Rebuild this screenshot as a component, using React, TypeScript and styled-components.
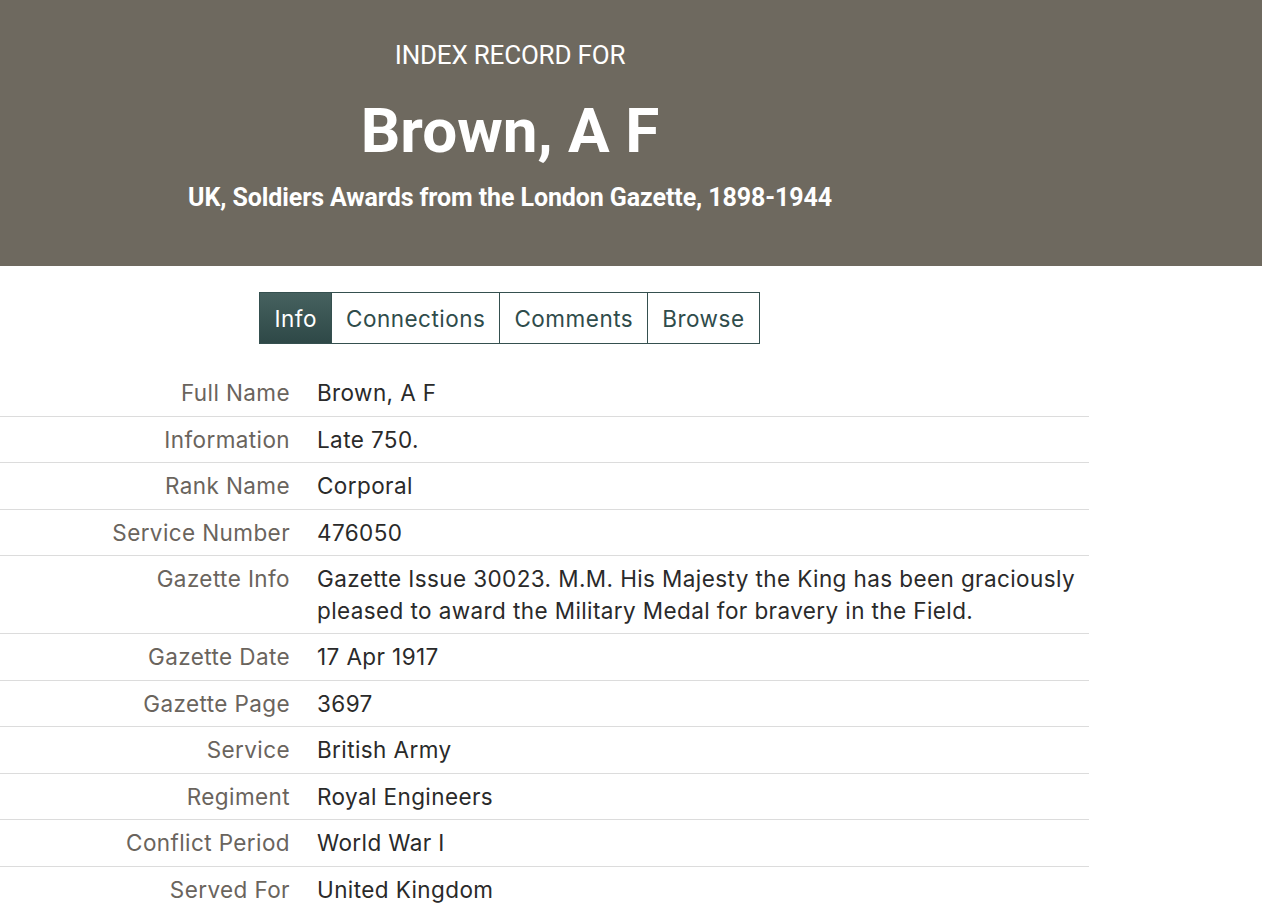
import styled, { createGlobalStyle } from "styled-components";

const GlobalStyle = createGlobalStyle`
  html, body {
    margin: 0;
    padding: 0;
    background: #fff;
  }
  body {
    font-family: Inter, "Liberation Sans", Arial, sans-serif;
  }
`;

const rows: [string, string][] = [
  ["Full Name", "Brown, A F"],
  ["Information", "Late 750."],
  ["Rank Name", "Corporal"],
  ["Service Number", "476050"],
  [
    "Gazette Info",
    "Gazette Issue 30023. M.M. His Majesty the King has been graciously pleased to award the Military Medal for bravery in the Field.",
  ],
  ["Gazette Date", "17 Apr 1917"],
  ["Gazette Page", "3697"],
  ["Service", "British Army"],
  ["Regiment", "Royal Engineers"],
  ["Conflict Period", "World War I"],
  ["Served For", "United Kingdom"],
];

const tabs = ["Info", "Connections", "Comments", "Browse"];

export default function App() {
  return (
    <>
      <GlobalStyle />
      <Header>
        <HeaderInner>
          <Kicker>INDEX RECORD FOR</Kicker>
          <Title>Brown, A F</Title>
          <Collection>UK, Soldiers Awards from the London Gazette, 1898-1944</Collection>
        </HeaderInner>
      </Header>
      <TabBar>
        {tabs.map((t, i) => (
          <Tab key={t} $active={i === 0}>
            {t}
          </Tab>
        ))}
      </TabBar>
      <Table>
        {rows.map(([label, value]) => (
          <Row key={label}>
            <Label>{label}</Label>
            <Value>{value}</Value>
          </Row>
        ))}
      </Table>
    </>
  );
}

const Header = styled.header`
  background: #6e695f;
  height: 266px;
  color: #fff;
`;

const HeaderInner = styled.div`
  width: 1020px;
  text-align: center;
  font-family: Roboto, "Liberation Sans", Arial, sans-serif;
  padding-top: 40px;
`;

const Kicker = styled.div`
  font-size: 26px;
  line-height: 30px;
  font-weight: 400;
  letter-spacing: -0.2px;
`;

const Title = styled.h1`
  margin: 25px 0 0;
  font-size: 62px;
  line-height: 72px;
  font-weight: 700;
`;

const Collection = styled.div`
  margin-top: 16px;
  font-size: 25px;
  line-height: 30px;
  font-weight: 700;
  letter-spacing: -0.1px;
`;

const TabBar = styled.nav`
  width: 1020px;
  display: flex;
  justify-content: center;
  margin-top: 26px;
`;

const Tab = styled.div<{ $active?: boolean }>`
  height: 50px;
  display: flex;
  align-items: center;
  padding: 0 14px;
  font-size: 22.5px;
  letter-spacing: 0.5px;
  border: 1px solid #35504f;
  margin-left: -1px;
  color: ${(p) => (p.$active ? "#fff" : "#2f4c4b")};
  background: ${(p) =>
    p.$active ? "linear-gradient(180deg, #46615f 0%, #2e4847 100%)" : "#fff"};
`;

const Table = styled.div`
  width: 1089px;
  margin-top: 26px;
`;

const Row = styled.div`
  display: grid;
  grid-template-columns: 290px 1fr;
  column-gap: 27px;
  padding: 7px 0;
  border-bottom: 1px solid #dcdcdc;
  font-size: 22.5px;
  letter-spacing: 0.4px;
  line-height: 31.5px;
  &:last-child {
    border-bottom: none;
  }
`;

const Label = styled.div`
  text-align: right;
  color: #6a645d;
`;

const Value = styled.div`
  color: #2a2a2a;
  padding-right: 6px;
`;
